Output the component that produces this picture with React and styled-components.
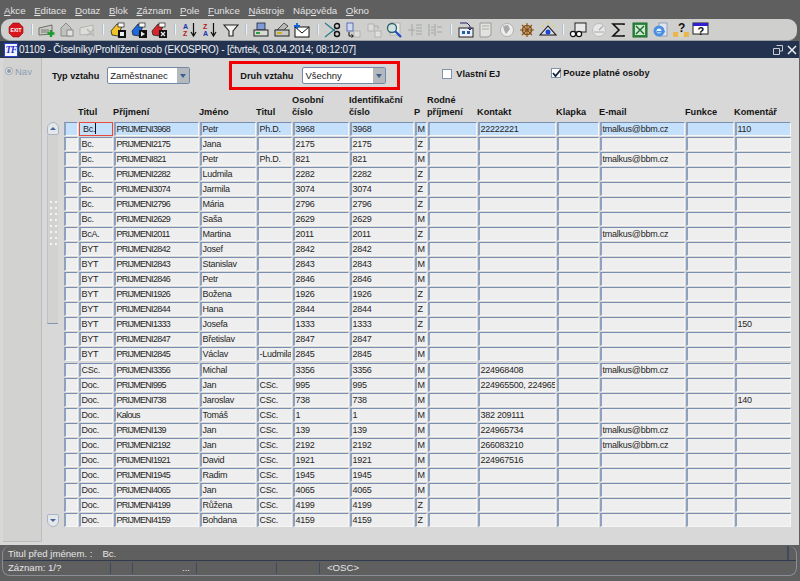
import styled, { createGlobalStyle } from "styled-components";

const GlobalStyle = createGlobalStyle`
  html, body {
    margin: 0;
    padding: 0;
    background: #5f5f5f;
  }
  * {
    box-sizing: border-box;
  }
`;

const COLUMNS = "14px 34px 85px 56px 35px 56px 64px 12px 49px 78px 42px 85px 48px 56px";

const rows = [
  ["Bc.", "PRIJMENI3968", "Petr", "Ph.D.", "3968", "3968", "M", "", "22222221", "", "tmalkus@bbm.cz", "", "110"],
  ["Bc.", "PRIJMENI2175", "Jana", "", "2175", "2175", "Z"],
  ["Bc.", "PRIJMENI821", "Petr", "Ph.D.", "821", "821", "M", "", "", "", "tmalkus@bbm.cz"],
  ["Bc.", "PRIJMENI2282", "Ludmila", "", "2282", "2282", "Z"],
  ["Bc.", "PRIJMENI3074", "Jarmila", "", "3074", "3074", "Z"],
  ["Bc.", "PRIJMENI2796", "Mária", "", "2796", "2796", "Z"],
  ["Bc.", "PRIJMENI2629", "Saša", "", "2629", "2629", "M"],
  ["BcA.", "PRIJMENI2011", "Martina", "", "2011", "2011", "Z", "", "", "", "tmalkus@bbm.cz"],
  ["BYT", "PRIJMENI2842", "Josef", "", "2842", "2842", "M"],
  ["BYT", "PRIJMENI2843", "Stanislav", "", "2843", "2843", "M"],
  ["BYT", "PRIJMENI2846", "Petr", "", "2846", "2846", "M"],
  ["BYT", "PRIJMENI1926", "Božena", "", "1926", "1926", "Z"],
  ["BYT", "PRIJMENI2844", "Hana", "", "2844", "2844", "Z"],
  ["BYT", "PRIJMENI1333", "Josefa", "", "1333", "1333", "Z", "", "", "", "", "", "150"],
  ["BYT", "PRIJMENI2847", "Břetislav", "", "2847", "2847", "M"],
  ["BYT", "PRIJMENI2845", "Václav", "-Ludmila", "2845", "2845", "M"],
  ["CSc.", "PRIJMENI3356", "Michal", "", "3356", "3356", "M", "", "224968408", "", "tmalkus@bbm.cz"],
  ["Doc.", "PRIJMENI995", "Jan", "CSc.", "995", "995", "M", "", "224965500, 224965"],
  ["Doc.", "PRIJMENI738", "Jaroslav", "CSc.", "738", "738", "M", "", "", "", "", "", "140"],
  ["Doc.", "Kalous", "Tomáš", "CSc.", "1", "1", "M", "", "382 209111"],
  ["Doc.", "PRIJMENI139", "Jan", "CSc.", "139", "139", "M", "", "224965734", "", "tmalkus@bbm.cz"],
  ["Doc.", "PRIJMENI2192", "Jan", "CSc.", "2192", "2192", "M", "", "266083210", "", "tmalkus@bbm.cz"],
  ["Doc.", "PRIJMENI1921", "David", "CSc.", "1921", "1921", "M", "", "224967516"],
  ["Doc.", "PRIJMENI1945", "Radim", "CSc.", "1945", "1945", "M"],
  ["Doc.", "PRIJMENI4065", "Jan", "CSc.", "4065", "4065", "M"],
  ["Doc.", "PRIJMENI4199", "Růžena", "CSc.", "4199", "4199", "Z"],
  ["Doc.", "PRIJMENI4159", "Bohdana", "CSc.", "4159", "4159", "Z"],
];

const headers = [
  "", "Titul", "Příjmení", "Jméno", "Titul", "Osobní číslo", "Identifikační číslo", "P",
  "Rodné příjmení", "Kontakt", "Klapka", "E-mail", "Funkce", "Komentář",
];

// letter that the menu underlines is kept apart from the rest of the label
const menus = [
  ["", "A", "kce"],
  ["", "E", "ditace"],
  ["", "D", "otaz"],
  ["", "B", "lok"],
  ["", "Z", "áznam"],
  ["", "P", "ole"],
  ["", "F", "unkce"],
  ["", "N", "ástroje"],
  ["Náp", "o", "věda"],
  ["", "O", "kno"],
];

const Page = styled.div`
  width: 800px;
  height: 581px;
  display: flex;
  flex-direction: column;
  overflow: hidden;
  background: #5f5f5f;
  font-family: "Liberation Sans", Arial, sans-serif;
`;

const MenuBar = styled.nav`
  height: 19px;
  display: flex;
  align-items: center;
  padding: 2px 0 0 4px;
  gap: 8.6px;
  flex-shrink: 0;
`;

const MenuItem = styled.span`
  font-size: 9.7px;
  color: #e2e2e2;
`;

const Toolbar = styled.div`
  height: 22px;
  flex-shrink: 0;
  margin: 0 3px 0 1px;
  padding-left: 5px;
  display: flex;
  align-items: center;
  background: #cfd0cd;
  border-radius: 9px;
  border-bottom: 1px solid #9aa0a6;
`;

const ToolIcon = styled.span`
  width: 20.5px;
  height: 18px;
  display: flex;
  align-items: center;
  justify-content: center;
  flex-shrink: 0;
`;

const ToolSep = styled.span`
  width: 2px;
  height: 11px;
  margin: 0 4px;
  background: #aebfd6;
  border-right: 1px solid #f2f2f2;
  flex-shrink: 0;
`;

const Window = styled.section`
  height: 504px;
  flex-shrink: 0;
  display: flex;
  flex-direction: column;
  background: #d8d8d8;
  margin-right: 1px;
`;

const TitleBar = styled.header`
  height: 17px;
  flex-shrink: 0;
  display: flex;
  align-items: center;
  padding: 0 2px 0 4px;
  background: #23334f;
  color: #eef0f4;
  font-size: 10px;
  letter-spacing: -0.2px;
`;

const TitleLogo = styled.span`
  width: 14px;
  height: 14px;
  margin-right: 1px;
  background: #f4f4ff;
  border: 1px solid #2b3fd0;
  color: #2430c8;
  font: italic bold 10px "Liberation Serif", serif;
  letter-spacing: -1px;
  display: flex;
  align-items: center;
  justify-content: center;
`;

const TitleText = styled.span`
  flex: 1;
`;

const WinButtons = styled.span`
  display: flex;
  align-items: center;
  gap: 4px;
`;

const WindowBody = styled.div`
  flex: 1;
  display: flex;
  padding: 0 0 3px 3px;
  min-height: 0;
`;

const NavPanel = styled.aside`
  width: 39px;
  flex-shrink: 0;
  background: #d2d3d0;
  border-right: 1px solid #bdbdbd;
  border-bottom: 1px solid #bdbdbd;
  padding: 8px 0 0 3px;
  font-size: 9.5px;
  color: #8f9db5;
  display: flex;
  align-items: flex-start;
  gap: 3px;
`;

const NavDot = styled.span`
  width: 6px;
  height: 6px;
  margin-top: 2px;
  border-radius: 50%;
  background: #8d97a6;
  border: 1px solid #e8e8e8;
  box-shadow: 0 0 0 1px #aab2bd;
`;

const Content = styled.div`
  flex: 1;
  min-width: 0;
  display: flex;
  flex-direction: column;
`;

const FilterBar = styled.div`
  height: 33px;
  display: flex;
  align-items: flex-start;
  padding: 3px 0 0 10px;
`;

const FilterLabel = styled.label`
  font-size: 9.2px;
  font-weight: bold;
  color: #151515;
  white-space: nowrap;
`;

const SelectBox = styled.div`
  height: 17px;
  width: ${(p) => p.$width}px;
  margin-left: ${(p) => p.$gap}px;
  display: flex;
  align-items: center;
  background: #fff;
  border: 1px solid #7389a8;
  border-radius: 2px;
  padding-left: 2px;
  font-size: 9.5px;
  color: #222;
`;

const SelectText = styled.span`
  flex: 1;
`;

const SelectArrow = styled.span`
  width: 12px;
  height: 15px;
  background: #b4b9bd;
  display: flex;
  align-items: center;
  justify-content: center;
  &::after {
    content: "";
    border-left: 3.5px solid transparent;
    border-right: 3.5px solid transparent;
    border-top: 4px solid #3f5f90;
  }
`;

const TypeGroup = styled.div`
  display: flex;
  align-items: center;
  height: 29px;
`;

const HighlightBox = styled.div`
  width: 171px;
  height: 29px;
  margin-left: 39px;
  border: 3px solid #f00000;
  display: flex;
  align-items: center;
  padding-left: 8px;
`;

const CheckGroup = styled.div`
  display: flex;
  align-items: center;
  margin-left: ${(p) => p.$left}px;
  margin-top: ${(p) => p.$top}px;
  gap: ${(p) => p.$gap}px;
`;

const CheckBox = styled.span`
  width: 10px;
  height: 10px;
  background: #fff;
  border: 1px solid #8193ab;
  position: relative;
  display: block;
`;

const CheckMark = styled.svg`
  position: absolute;
  left: 0;
  top: 0;
`;

const Grid = styled.div`
  display: flex;
  flex: 1;
  padding: 0 0 0 5px;
  min-height: 0;
`;

const ScrollColumn = styled.div`
  width: 11px;
  height: 405px;
  margin: 31px 6px 0 0;
  display: flex;
  flex-direction: column;
  justify-content: flex-start;
`;

const ScrollButton = styled.span`
  height: 13px;
  width: 12px;
  flex-shrink: 0;
  background: #e4e7ea;
  border: 1px solid #aab4c4;
  border-radius: ${(p) => (p.$up ? "6px 6px 2px 2px" : "2px 2px 6px 6px")};
  display: flex;
  align-items: center;
  justify-content: center;
  margin-top: ${(p) => (p.$up ? "0" : "auto")};
  &::after {
    content: "";
    border-left: 3px solid transparent;
    border-right: 3px solid transparent;
    border-${(p) => (p.$up ? "bottom" : "top")}: 3px solid #44669a;
  }
`;

const ScrollThumb = styled.div`
  height: 189px;
  padding-bottom: 12px;
  background: #d2d3d1;
  border-left: 1px solid #bdc0c4;
  border-bottom: 1px solid #7f93b3;
  display: flex;
  flex-direction: column;
  align-items: center;
  justify-content: center;
  gap: 4px;
`;

const GripDot = styled.span`
  width: 7px;
  height: 2px;
  border-left: 2px solid #f4f4f4;
  border-right: 2px solid #f4f4f4;
`;

const Table = styled.div`
  width: 727px;
  display: flex;
  flex-direction: column;
`;

const HeaderRow = styled.div`
  display: grid;
  grid-template-columns: ${COLUMNS};
  column-gap: 1px;
  height: 31px;
`;

const HeaderCell = styled.span`
  align-self: end;
  margin-left: -1px;
  font-size: 9.2px;
  font-weight: bold;
  line-height: 12px;
  color: #151515;
  padding-bottom: 4px;
  white-space: pre-line;
`;

const DataRow = styled.div`
  display: grid;
  grid-template-columns: ${COLUMNS};
  column-gap: 1px;
  height: 15.04px;
`;

const Cell = styled.span`
  height: 14px;
  display: block;
  overflow: hidden;
  white-space: nowrap;
  font-size: 9px;
  letter-spacing: ${(p) => (p.$tight ? "-0.7px" : "-0.25px")};
  line-height: 12px;
  padding-left: 0.5px;
  color: #252525;
  background: ${(p) => (p.$current ? "#c5e0fb" : "#eeeeee")};
  border-top: 1px solid #7a8fb0;
  border-left: 2px solid #8ea2c0;
  border-right: 1px solid #f6f6f6;
  border-bottom: 1px solid #f6f6f6;
  ${(p) =>
    p.$focus &&
    `
    border: 1px solid #e8483a;
    padding-left: 3px;
    background: #c5e0fb;
  `}
`;

const Caret = styled.span`
  display: inline-block;
  width: 1px;
  height: 11px;
  vertical-align: -2px;
  background: #111;
`;

const StatusBar = styled.footer`
  flex: 1;
  margin: 1px 3px 5px 2px;
  display: flex;
  flex-direction: column;
  border: 1px solid #8a8f98;
  border-top: none;
  border-radius: 8px;
  font-size: 9.6px;
  color: #e6e6e6;
`;

const StatusHint = styled.div`
  height: 15px;
  display: flex;
  align-items: center;
  padding-left: 5px;
  gap: 10px;
  border-bottom: 1px solid #2f3a4e;
  white-space: nowrap;
`;

const HintEnd = styled.span`
  margin-left: auto;
  width: 9px;
  height: 100%;
  border-left: 2px solid #3d4a60;
`;

const StatusRow = styled.div`
  display: grid;
  grid-template-columns: 102px 22px 64px 80px 43px 1fr;
  flex: 1;
  align-items: center;
  padding-left: 5px;
`;

const StatusCell = styled.span`
  height: 12px;
  line-height: 12px;
  padding-left: ${(p) => (p.$first ? "0" : "7px")};
  padding-right: ${(p) => (p.$align ? "6px" : "0")};
  border-left: ${(p) => (p.$first ? "none" : "1px solid #3d4a60")};
  text-align: ${(p) => p.$align || "left"};
`;

function Svg({ children, w = 18, h = 16 }) {
  return (
    <svg width={w} height={h} viewBox={`0 0 ${w} ${h}`}>
      {children}
    </svg>
  );
}

// record icon with a coloured tag (enter, execute, cancel query)
function QueryIcon({ color, mark }) {
  return (
    <Svg>
      <path d="M2 9 L8 2 L13 4 L9 14 L3 13 Z" fill={color} stroke="#222" strokeWidth=".8" />
      <rect x="9" y="1" width="6" height="4" fill="#fff" stroke="#222" strokeWidth=".7" />
      <rect x="9" y="8" width="8" height="8" fill="#111" />
      {mark === "save" && <rect x="11" y="10" width="4" height="4" fill="#eee" />}
      {mark === "play" && <path d="M11 9.5 L15 12 L11 14.5 Z" fill="#eee" />}
      {mark === "x" && <path d="M11 10 L15 14 M15 10 L11 14" stroke="#eee" strokeWidth="1.2" />}
    </Svg>
  );
}

function SortIcon({ first, second, firstColor, secondColor }) {
  return (
    <Svg>
      <text x="2" y="7" fontSize="7" fontWeight="bold" fill={firstColor} fontFamily="Liberation Sans">{first}</text>
      <text x="2" y="14" fontSize="7" fontWeight="bold" fill={secondColor} fontFamily="Liberation Sans">{second}</text>
      <path d="M12.5 1 V13 M10 10 L12.5 14 L15 10" stroke="#111" strokeWidth="1.2" fill="none" />
    </Svg>
  );
}

const tools = [
  <Svg key="exit">
    <path d="M6 1 H12 L16 5 V11 L12 15 H6 L2 11 V5 Z" fill="#d8141c" stroke="#8a1014" strokeWidth=".6" />
    <text x="9" y="10" fontSize="5" fontWeight="bold" fill="#fff" textAnchor="middle" fontFamily="Liberation Sans">EXIT</text>
  </Svg>,
  "sep",
  <Svg key="ins">
    <path d="M1 6 L14 3 V12 L1 13 Z" fill="#c9c9c4" stroke="#555" strokeWidth=".8" />
    <path d="M3 8 H11 M3 10 H11" stroke="#777" />
    <path d="M13 8 V15 M9.5 11.5 H16.5" stroke="#1d9a2e" strokeWidth="2.4" />
  </Svg>,
  <Svg key="dup">
    <path d="M3 6 L8 1 L13 6 V14 H3 Z" fill="#bfc2bd" stroke="#8a8a8a" />
    <rect x="9" y="8" width="6" height="6" fill="#e2e2e2" stroke="#8a8a8a" />
  </Svg>,
  <Svg key="del">
    <path d="M1 6 L14 3 V12 L1 13 Z" fill="#dcdcd8" stroke="#aaa" strokeWidth=".8" />
    <path d="M8 7 L15 14 M15 7 L8 14" stroke="#b8b8b8" strokeWidth="1.6" />
  </Svg>,
  "sep",
  <QueryIcon key="q1" color="#f3c428" mark="save" />,
  <QueryIcon key="q2" color="#1c6ae0" mark="play" />,
  <QueryIcon key="q3" color="#d8242c" mark="x" />,
  "sep",
  <SortIcon key="az" first="A" second="Z" firstColor="#2030b0" secondColor="#b02020" />,
  <SortIcon key="za" first="Z" second="A" firstColor="#b02020" secondColor="#2030b0" />,
  <Svg key="filter">
    <path d="M2 3 H16 L11 9 V14 L7 14 V9 Z" fill="#f2f2f2" stroke="#222" strokeWidth="1.1" />
  </Svg>,
  "sep",
  <Svg key="print">
    <rect x="5" y="1" width="8" height="7" fill="#7f9ad8" stroke="#223" strokeWidth=".8" />
    <rect x="2" y="8" width="14" height="6" fill="#d8d8d4" stroke="#222" />
    <rect x="4" y="10" width="4" height="2" fill="#28a040" />
  </Svg>,
  <Svg key="print2">
    <path d="M4 8 L11 1 L15 4 L10 9 Z" fill="#b8b8b8" stroke="#333" strokeWidth=".8" />
    <rect x="2" y="8" width="14" height="6" fill="#c8c8c4" stroke="#222" />
    <rect x="4" y="10" width="5" height="2" fill="#c8b020" />
  </Svg>,
  <Svg key="mail">
    <rect x="2" y="5" width="14" height="10" fill="#fff" stroke="#111" />
    <path d="M2 5 L9 11 L16 5" stroke="#111" fill="none" />
    <path d="M1 4 H7 M4 1 V7" stroke="#1060d0" strokeWidth="1.8" />
  </Svg>,
  "sep",
  <Svg key="cut">
    <path d="M1 1 L11 9 M1 15 L11 7" stroke="#2a7a90" strokeWidth="1.2" />
    <circle cx="13" cy="4" r="2.5" fill="none" stroke="#111" strokeWidth="1.4" />
    <circle cx="13" cy="12" r="2.5" fill="none" stroke="#111" strokeWidth="1.4" />
  </Svg>,
  <Svg key="copy">
    <rect x="3" y="1" width="6" height="8" fill="#cfd8f0" stroke="#4058a8" strokeWidth=".8" />
    <path d="M5 10 V14 H9 M7.5 12.5 L9.5 14 L7.5 15.5" stroke="#111" fill="none" />
    <rect x="10" y="9" width="6" height="6" fill="#ddd" stroke="#aaa" strokeWidth=".8" />
  </Svg>,
  <Svg key="paste">
    <rect x="3" y="2" width="6" height="7" fill="#dcdcdc" stroke="#aaa" strokeWidth=".8" />
    <path d="M9 4 H13 V7" stroke="#aaa" fill="none" />
    <rect x="10" y="9" width="6" height="6" fill="#e0e0e0" stroke="#aaa" strokeWidth=".8" />
  </Svg>,
  <Svg key="find">
    <path d="M5 1 H15 V13 H5 Z" fill="#ececec" stroke="#aaa" strokeWidth=".8" />
    <circle cx="7" cy="6" r="4.5" fill="#cfe4e2" stroke="#2f5f64" strokeWidth="1.3" />
    <path d="M10 9 L16 15" stroke="#2050c0" strokeWidth="2.4" />
  </Svg>,
  <Svg key="list1">
    <path d="M6 2 V14 M10 3 H16 M10 6 H16 M10 9 H16 M10 12 H16 M2 8 H9" stroke="#a4a8a4" strokeWidth="1.1" fill="none" />
  </Svg>,
  <Svg key="list2">
    <path d="M3 2 V14 M9 2 V14 M5 5 H8 M5 8 H8 M5 11 H8 M11 5 H16 M11 10 H16" stroke="#a4a8a4" strokeWidth="1.1" fill="none" />
  </Svg>,
  "sep",
  <Svg key="tree">
    <rect x="2" y="6" width="14" height="9" fill="#eef" stroke="#222" />
    <path d="M3 1 H10 L13 4 V7 M13 8 L11 6 M13 8 L15 6" stroke="#226" fill="none" />
    <rect x="5" y="9" width="3" height="3" fill="#2060a0" />
    <rect x="10" y="9" width="3" height="3" fill="#2060a0" />
  </Svg>,
  <Svg key="doc">
    <path d="M3 1 H14 V13 L11 15 H3 Z" fill="#e2e2de" stroke="#9a9a9a" />
    <path d="M5 4 H12 M5 7 H12" stroke="#aaa" />
  </Svg>,
  <Svg key="globe">
    <circle cx="9" cy="8" r="6.5" fill="#eeeeee" stroke="#b0b0b0" />
    <path d="M5 4 L10 3 L12 7 L8 12 L6 8 Z" fill="#a8a8a8" />
  </Svg>,
  <Svg key="wheel">
    <circle cx="9" cy="8" r="4.5" fill="none" stroke="#8a5010" strokeWidth="1.6" />
    <path d="M9 1 V15 M2 8 H16 M4 3 L14 13 M14 3 L4 13" stroke="#8a5010" strokeWidth="1.1" />
  </Svg>,
  <Svg key="tri">
    <path d="M1 13 L9 4 L17 13 Z" fill="#dde" stroke="#111" strokeWidth="1.1" />
    <circle cx="9" cy="10" r="2.5" fill="#1848d0" />
    <path d="M3 3 L5 5 M9 0 V2 M15 3 L13 5" stroke="#e8d020" />
  </Svg>,
  "sep",
  <Svg key="glasses">
    <rect x="6" y="1" width="11" height="9" fill="#e8e8e8" stroke="#222" />
    <circle cx="4" cy="12" r="2.6" fill="#fff" stroke="#111" strokeWidth="1.2" />
    <circle cx="10" cy="12" r="2.6" fill="#fff" stroke="#111" strokeWidth="1.2" />
  </Svg>,
  <Svg key="stamp">
    <circle cx="9" cy="8" r="6.5" fill="#e8e8e8" stroke="#bcbcbc" />
    <path d="M4 10 H14 M9 8 L13 4" stroke="#a8a8a8" strokeWidth="1.2" />
  </Svg>,
  <Svg key="sigma">
    <path d="M14 3 V2 H3 L9 8 L3 14 H14 V13" fill="none" stroke="#111" strokeWidth="1.6" />
  </Svg>,
  <Svg key="excel">
    <rect x="2" y="1" width="14" height="14" fill="#2f8a40" stroke="#1e6a30" />
    <rect x="4" y="3" width="10" height="10" fill="#cfe8cf" />
    <path d="M5 4 L13 12 M13 4 L5 12" stroke="#1e6a30" strokeWidth="1.4" />
  </Svg>,
  <Svg key="ie">
    <rect x="8" y="1" width="8" height="13" fill="#dfe4ef" stroke="#7a8ab0" strokeWidth=".7" />
    <circle cx="8" cy="9" r="5.5" fill="#4a90e0" />
    <circle cx="8" cy="9" r="2.5" fill="#e8f2fc" />
    <rect x="6" y="9" width="8" height="1.4" fill="#4a90e0" />
  </Svg>,
  <Svg key="helpp">
    <text x="6" y="10" fontSize="12" fontWeight="bold" fill="#111" fontFamily="Liberation Sans">?</text>
    <rect x="1" y="10" width="5" height="5" fill="#e8b850" />
    <rect x="7" y="11" width="4" height="4" fill="#e8d8a0" />
    <rect x="12" y="10" width="5" height="5" fill="#e8b850" />
  </Svg>,
  <Svg key="helpw">
    <rect x="1" y="1" width="15" height="11" fill="#fff" stroke="#222" />
    <rect x="1" y="1" width="15" height="3" fill="#3020d0" />
    <text x="5.5" y="13" fontSize="11" fontWeight="bold" fill="#111" fontFamily="Liberation Sans">?</text>
  </Svg>,
];

function App() {
  return (
    <>
      <GlobalStyle />
      <Page>
        <MenuBar>
          {menus.map(([before, key, after]) => (
            <MenuItem key={before + key + after}>
              {before}
              <u>{key}</u>
              {after}
            </MenuItem>
          ))}
        </MenuBar>
        <Toolbar>
          {tools.map((t, i) => (t === "sep" ? <ToolSep key={i} /> : <ToolIcon key={i}>{t}</ToolIcon>))}
        </Toolbar>
        <Window>
          <TitleBar>
            <TitleLogo>TF</TitleLogo>
            <TitleText>01109 - Číselníky/Prohlížení osob (EKOSPRO) - [čtvrtek, 03.04.2014; 08:12:07]</TitleText>
            <WinButtons>
              <svg width="10" height="10" viewBox="0 0 10 10">
                <path d="M3.5 .5 H9.5 V6 H7 M.5 3.5 H6.5 V9.5 H.5 Z" fill="none" stroke="#c8ccd4" />
              </svg>
              <svg width="10" height="10" viewBox="0 0 10 10">
                <path d="M1 1 L9 9 M9 1 L1 9" stroke="#eef0f4" strokeWidth="1.5" />
              </svg>
            </WinButtons>
          </TitleBar>
          <WindowBody>
            <NavPanel>
              <NavDot />
              Nav
            </NavPanel>
            <Content>
              <FilterBar>
                <TypeGroup>
                  <FilterLabel>Typ vztahu</FilterLabel>
                  <SelectBox $width={83} $gap={8}>
                    <SelectText>Zaměstnanec</SelectText>
                    <SelectArrow />
                  </SelectBox>
                </TypeGroup>
                <HighlightBox>
                  <FilterLabel>Druh vztahu</FilterLabel>
                  <SelectBox $width={84} $gap={9}>
                    <SelectText>Všechny</SelectText>
                    <SelectArrow />
                  </SelectBox>
                </HighlightBox>
                <CheckGroup $left={42} $top={8} $gap={4}>
                  <CheckBox />
                  <FilterLabel>Vlastní EJ</FilterLabel>
                </CheckGroup>
                <CheckGroup $left={51} $top={7} $gap={2}>
                  <CheckBox>
                    <CheckMark width="10" height="9" viewBox="0 0 10 9">
                      <path d="M1 4 L3.5 7 L8.5 1" fill="none" stroke="#16233f" strokeWidth="1.8" />
                    </CheckMark>
                  </CheckBox>
                  <FilterLabel>Pouze platné osoby</FilterLabel>
                </CheckGroup>
              </FilterBar>
              <Grid>
                <ScrollColumn>
                  <ScrollButton $up />
                  <ScrollThumb>
                    {Array.from({ length: 8 }, (_, i) => (
                      <GripDot key={i} />
                    ))}
                  </ScrollThumb>
                  <ScrollButton />
                </ScrollColumn>
                <Table>
                  <HeaderRow>
                    {headers.map((h, i) => (
                      <HeaderCell key={i}>{h.replace(" ", "\n")}</HeaderCell>
                    ))}
                  </HeaderRow>
                  {rows.map((r, i) => (
                    <DataRow key={i}>
                      <Cell $current={i === 0} />
                      {Array.from({ length: 13 }, (_, c) => (
                        <Cell key={c} $current={i === 0} $focus={i === 0 && c === 0} $tight={c === 1}>
                          {r[c] || ""}
                          {i === 0 && c === 0 && <Caret />}
                        </Cell>
                      ))}
                    </DataRow>
                  ))}
                </Table>
              </Grid>
            </Content>
          </WindowBody>
        </Window>
        <StatusBar>
          <StatusHint>
            <span>Titul před jménem. :</span>
            <span>Bc.</span>
            <HintEnd />
          </StatusHint>
          <StatusRow>
            <StatusCell $first>Záznam: 1/?</StatusCell>
            <StatusCell />
            <StatusCell $align="right">...</StatusCell>
            <StatusCell />
            <StatusCell />
            <StatusCell>&lt;OSC&gt;</StatusCell>
          </StatusRow>
        </StatusBar>
      </Page>
    </>
  );
}

export default App;
